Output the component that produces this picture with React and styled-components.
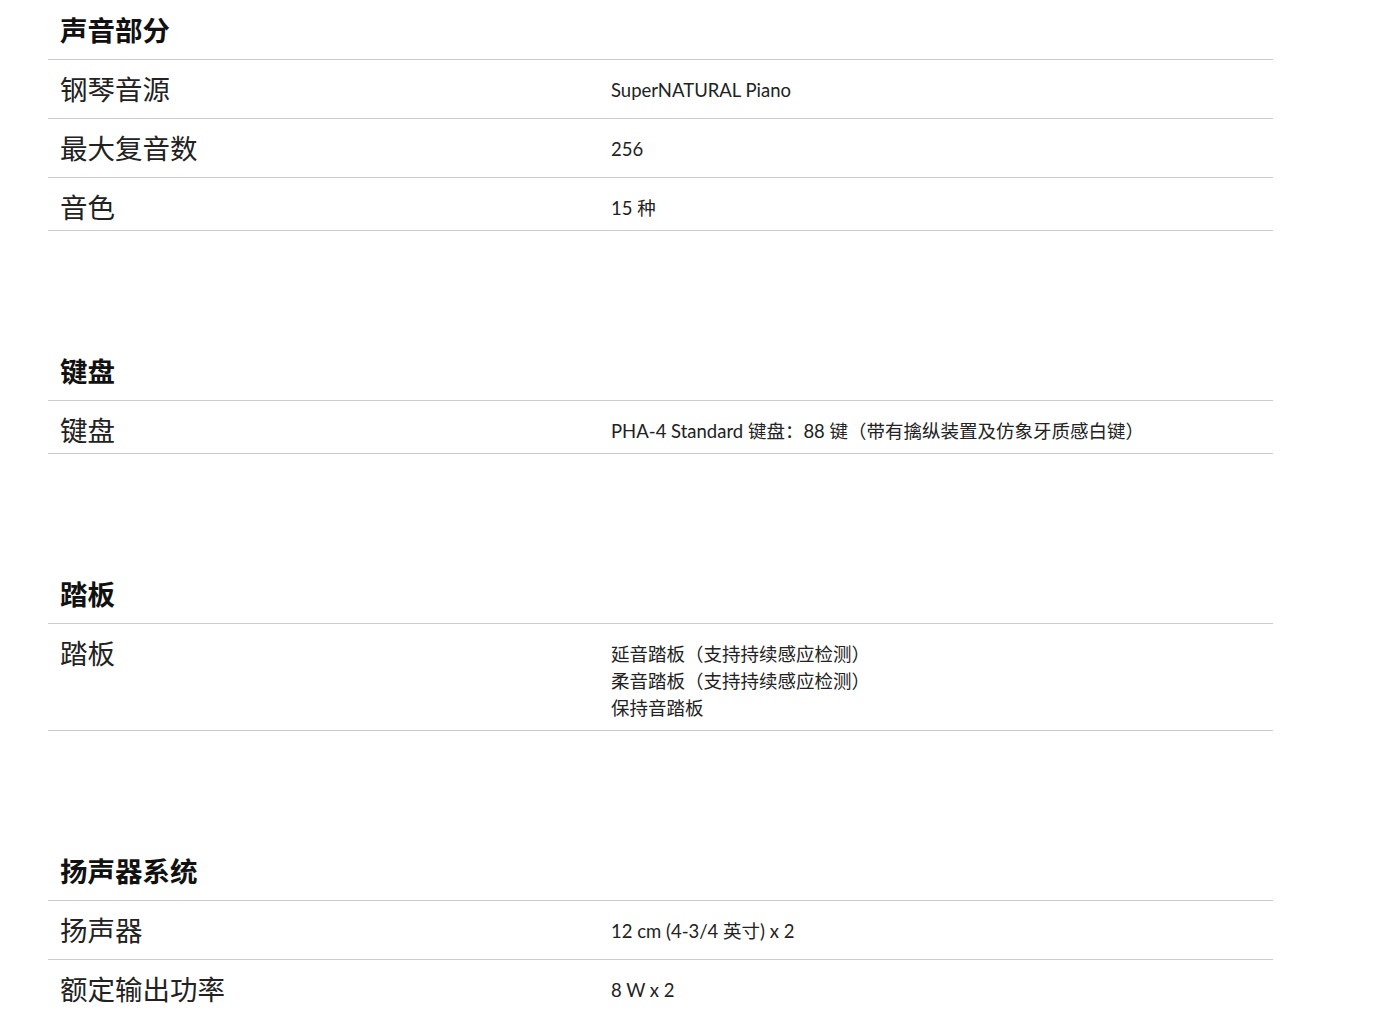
import React from "react";
import styled, { createGlobalStyle } from "styled-components";

const specs = [
  {
    title: "声音部分",
    rows: [
      { label: "钢琴音源", value: ["SuperNATURAL Piano"] },
      { label: "最大复音数", value: ["256"] },
      { label: "音色", value: ["15 种"] },
    ],
  },
  {
    title: "键盘",
    rows: [
      {
        label: "键盘",
        value: ["PHA-4 Standard 键盘：88 键（带有擒纵装置及仿象牙质感白键）"],
      },
    ],
  },
  {
    title: "踏板",
    rows: [
      {
        label: "踏板",
        value: [
          "延音踏板（支持持续感应检测）",
          "柔音踏板（支持持续感应检测）",
          "保持音踏板",
        ],
      },
    ],
  },
  {
    title: "扬声器系统",
    rows: [
      { label: "扬声器", value: ["12 cm (4-3/4 英寸) x 2"] },
      { label: "额定输出功率", value: ["8 W x 2"] },
    ],
  },
];

const App = () => {
  return (
    <>
      <GlobalStyle />
      <Page>
        {specs.map((section) => (
          <Section key={section.title}>
            <Heading>{section.title}</Heading>
            <Table>
              {section.rows.map((row) => (
                <Row key={row.label}>
                  <Label>{row.label}</Label>
                  <Value>
                    {row.value.map((line) => (
                      <Line key={line}>{line}</Line>
                    ))}
                  </Value>
                </Row>
              ))}
            </Table>
          </Section>
        ))}
      </Page>
    </>
  );
};

export default App;

const GlobalStyle = createGlobalStyle`
  body {
    margin: 0;
    background: #fff;
    font-family: "Lato", "Noto Sans CJK SC", sans-serif;
    color: #222;
  }
`;

const Page = styled.div`
  width: 1225px;
  padding: 0 48px;
`;

const Section = styled.section`
  margin-bottom: 110px;
`;

const Heading = styled.h2`
  margin: 0;
  padding: 12px 12px 13px;
  font-family: "Noto Sans CJK SC", sans-serif;
  font-size: 27.5px;
  line-height: 34px;
  font-weight: 700;
  color: #111;
`;

const Table = styled.div`
  border-bottom: 1px solid #cccccc;
`;

const Row = styled.div`
  display: grid;
  grid-template-columns: 563px 1fr;
  border-top: 1px solid #cccccc;
  padding: 11px 0 7px;
  &:not(:last-child) {
    padding-bottom: 13px;
  }
`;

const Label = styled.div`
  padding-left: 12px;
  font-family: "Noto Sans CJK SC", sans-serif;
  font-size: 27.5px;
  line-height: 34px;
  color: #222;
`;

const Value = styled.div`
  padding: 6px 0 1px;
  font-family: "Lato", "Noto Sans CJK SC", sans-serif;
  font-size: 18.5px;
  line-height: 27px;
  color: #222;
`;

const Line = styled.div``;
